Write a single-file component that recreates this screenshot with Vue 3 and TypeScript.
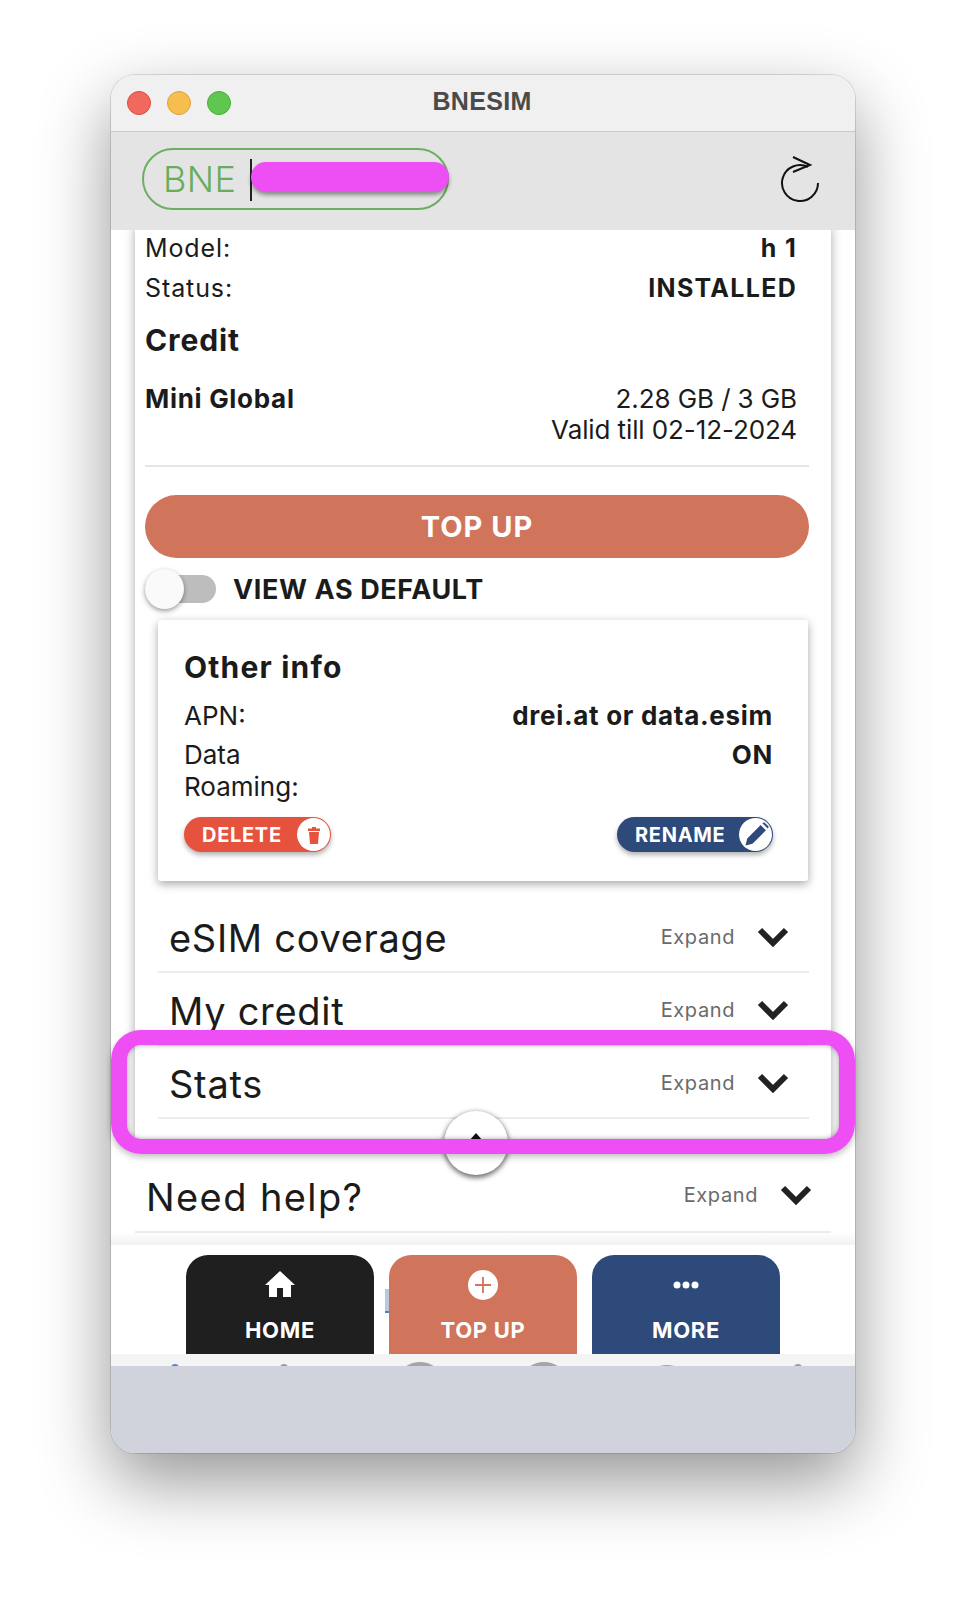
<script setup lang="ts">
const sections = ['eSIM coverage', 'My credit', 'Stats']
const navItems = [
  { label: 'HOME', cls: 'black', icon: 'home' },
  { label: 'TOP UP', cls: 'salmon', icon: 'plus' },
  { label: 'MORE', cls: 'navy', icon: 'dots' },
]
</script>

<template>
  <div class="window">
    <div class="titlebar">
      <span class="light red"></span>
      <span class="light yellow"></span>
      <span class="light green"></span>
      <span class="title">BNESIM</span>
    </div>

    <div class="header">
      <div class="search">
        <span class="search-text">BNE</span>
        <span class="caret"></span>
        <span class="redact"></span>
      </div>
      <svg class="reload" width="40" height="48" viewBox="0 0 40 48" fill="none" stroke="#111" stroke-width="2">
        <path d="M28 11.900 A18 18 0 1 0 38 28" />
        <path d="M13 2 L30 10 L13 17" />
      </svg>
    </div>

    <div class="scroll">
      <div class="card">
        <div class="row info first"><span>Model:</span><b>h 1</b></div>
        <div class="row info"><span>Status:</span><b>INSTALLED</b></div>
        <div class="credit-title">Credit</div>
        <div class="row plan">
          <b>Mini Global</b>
          <div class="plan-right">2.28 GB / 3 GB<br />Valid till 02-12-2024</div>
        </div>
        <div class="divider"></div>
        <button class="topup">TOP UP</button>
        <div class="default-row">
          <span class="toggle"><span class="knob"></span></span>
          <span class="default-label">VIEW AS DEFAULT</span>
        </div>

        <div class="other">
          <div class="other-title">Other info</div>
          <div class="row apn"><span>APN:</span><b>drei.at or data.esim</b></div>
          <div class="row roaming"><span>Data<br />Roaming:</span><b>ON</b></div>
          <div class="row actions">
            <button class="pill del">
              DELETE
              <span class="pill-icon">
                <svg width="14" height="18" viewBox="0 0 14 18" fill="#e5533f">
                  <path d="M1 2.500h4V1h4v1.500h4V5H1zM2 6h10l-1 12H3z" />
                </svg>
              </span>
            </button>
            <button class="pill ren">
              RENAME
              <span class="pill-icon">
                <svg width="28" height="28" viewBox="0 0 24 24" fill="#2d4a7a">
                  <path d="M3 21l1.500-6L16 3.500l4.500 4.500L9 19.500zM17.500 2l1.500-1 4 4-1 1.500z" />
                </svg>
              </span>
            </button>
          </div>
        </div>

        <div class="sections">
          <div v-for="s in sections" :key="s" class="section">
            <span class="section-title">{{ s }}</span>
            <span class="expand">Expand</span>
            <svg class="chev" width="32" height="20" viewBox="0 0 32 20" fill="none" stroke="#222" stroke-width="6">
              <path d="M3 3 L16 16 L29 3" />
            </svg>
          </div>
        </div>
      </div>

      <div class="section help">
        <span class="section-title">Need help?</span>
        <span class="expand">Expand</span>
        <svg class="chev" width="32" height="20" viewBox="0 0 32 20" fill="none" stroke="#222" stroke-width="6">
          <path d="M3 3 L16 16 L29 3" />
        </svg>
      </div>
      <div class="fade"></div>
    </div>

    <div class="nav">
      <span class="peek-link"></span>
      <div v-for="n in navItems" :key="n.label" class="nav-btn" :class="n.cls">
        <svg v-if="n.icon === 'home'" width="32" height="28" viewBox="0 0 32 28" fill="#fff">
          <path d="M16 1 L31 15 H27 V27 H19 V18 H13 V27 H5 V15 H1 Z" />
        </svg>
        <span v-else-if="n.icon === 'plus'" class="plus-circle">
          <svg width="16" height="16" viewBox="0 0 16 16" stroke="#d0745c" stroke-width="1.800">
            <path d="M8 0v16M0 8h16" />
          </svg>
        </span>
        <svg v-else class="dots" width="26" height="28" viewBox="0 0 26 28" fill="#fff">
          <circle cx="4" cy="14" r="3.500" />
          <circle cx="13" cy="14" r="3.500" />
          <circle cx="22" cy="14" r="3.500" />
        </svg>
        <span class="nav-label">{{ n.label }}</span>
      </div>
    </div>

    <div class="strip">
      <span class="bump small blue" style="left: 60px"></span>
      <span class="bump small" style="left: 169px"></span>
      <span class="bump" style="left: 284px"></span>
      <span class="bump" style="left: 408px"></span>
      <span class="bump mid" style="left: 531px"></span>
      <span class="bump small" style="left: 683px"></span>
    </div>
    <div class="dock"></div>

    <div class="scrolltop">
      <svg width="14" height="10" viewBox="0 0 14 10" fill="#111"><path d="M7 0 L14 8 H0 Z" /></svg>
    </div>
    <div class="highlight"></div>
  </div>
</template>

<style>
html,
body {
  margin: 0;
  background: #fff;
}
</style>

<style scoped>
.window {
  position: relative;
  box-sizing: border-box;
  width: 744px;
  height: 1378px;
  margin: 75px 0 147px 111px;
  border-radius: 24px;
  display: flex;
  flex-direction: column;
  font-family: Inter, "Open Sans", sans-serif;
  color: #1b1b1b;
  box-shadow: 0 0 0 1px rgba(0, 0, 0, 0.12), 0 28px 70px rgba(0, 0, 0, 0.42);
}

.titlebar {
  position: relative;
  height: 57px;
  flex: none;
  display: flex;
  align-items: center;
  gap: 16px;
  padding-left: 16px;
  background: #f0f0f0;
  border-bottom: 1px solid #c9c9c9;
  border-radius: 24px 24px 0 0;
  box-sizing: border-box;
}
.light {
  width: 24px;
  height: 24px;
  border-radius: 50%;
  box-sizing: border-box;
}
.red { background: #f1695c; border: 1px solid #dd4a3f; }
.yellow { background: #f6bd4f; border: 1px solid #dfa136; }
.green { background: #5fc64f; border: 1px solid #49ad39; }
.title {
  position: absolute;
  left: 311px;
  top: 12px;
  width: 120px;
  text-align: center;
  font: 700 25px "Liberation Sans", sans-serif;
  letter-spacing: 0.3px;
  color: #4a4a4a;
}

.header {
  height: 98px;
  box-sizing: border-box;
  flex: none;
  display: flex;
  align-items: center;
  justify-content: space-between;
  padding: 0 35px 4px 31px;
  background: #e4e4e4;
}
.search {
  position: relative;
  box-sizing: border-box;
  width: 307px;
  height: 62px;
  display: flex;
  align-items: center;
  border: 2px solid #6cae62;
  border-radius: 31px;
}
.search-text {
  margin-left: 19px;
  font-size: 36px;
  font-weight: 300;
  letter-spacing: 0.4px;
  color: #66ae5c;
}
.caret {
  position: absolute;
  left: 106px;
  top: 9px;
  width: 1.500px;
  height: 42px;
  background: #222;
}
.redact {
  position: absolute;
  left: 107px;
  top: 12px;
  width: 198px;
  height: 30px;
  background: #ed4ff5;
  border-radius: 15px;
  box-shadow: 0 3px 4px rgba(0, 0, 0, 0.4);
}

.scroll {
  height: 1015px;
  flex: none;
  background: #fff;
  overflow: hidden;
  position: relative;
}
.card {
  box-sizing: border-box;
  width: 696px;
  height: 916px;
  margin-left: 24px;
  padding: 0 22px 0 10px;
  background: #fff;
  box-shadow: 0 0 10px rgba(0, 0, 0, 0.35);
}
.row {
  display: flex;
  justify-content: space-between;
}
.info {
  height: 40px;
  align-items: center;
  font-size: 25px;
  padding-right: 12px;
  letter-spacing: 0.9px;
}
.info.first { margin-top: -2px; }
.info b {
  font-weight: 700;
  letter-spacing: 1.300px;
}
.credit-title {
  height: 40px;
  line-height: 40px;
  margin-top: 12px;
  font-size: 30px;
  font-weight: 700;
  letter-spacing: 0.9px;
}
.plan {
  margin-top: 23px;
  padding-right: 12px;
  font-size: 26px;
  line-height: 31px;
}
.plan b { letter-spacing: 0.7px; }
.plan-right {
  text-align: right;
  letter-spacing: -0.1px;
}
.divider {
  height: 2px;
  margin-top: 20px;
  background: #e5e5e5;
}
.topup {
  display: block;
  width: 100%;
  height: 63px;
  margin-top: 28px;
  border: none;
  border-radius: 32px;
  background: #d0745c;
  color: #fff;
  font: 700 29px Inter, sans-serif;
  letter-spacing: 1px;
}
.default-row {
  display: flex;
  align-items: center;
  height: 40px;
  margin-top: 11px;
}
.toggle {
  position: relative;
  display: block;
  width: 71px;
  height: 28px;
  border-radius: 14px;
  background: #bdbdbd;
}
.knob {
  position: absolute;
  left: 0;
  top: -6px;
  width: 39px;
  height: 40px;
  border-radius: 50%;
  background: #fafafa;
  box-shadow: 0 2px 5px rgba(0, 0, 0, 0.4);
}
.default-label {
  margin-left: 17px;
  font-size: 27px;
  font-weight: 700;
  letter-spacing: 0.6px;
}

.other {
  box-sizing: border-box;
  width: 650px;
  height: 261px;
  margin: 11px 0 0 13px;
  padding: 27px 35px 0 26px;
  border-radius: 3px;
  background: #fff;
  box-shadow: 0 3px 10px rgba(0, 0, 0, 0.35);
}
.other-title {
  height: 40px;
  line-height: 40px;
  font-size: 30px;
  font-weight: 700;
  letter-spacing: 1.200px;
}
.apn {
  height: 32px;
  line-height: 32px;
  margin-top: 13px;
  font-size: 26px;
}
.roaming {
  height: 64px;
  line-height: 32px;
  margin-top: 7px;
  font-size: 26px;
}
.apn b,
.roaming b {
  font-weight: 700;
  letter-spacing: 0.7px;
}
.actions { margin-top: 14px; }
.pill {
  display: flex;
  align-items: center;
  justify-content: space-between;
  height: 35px;
  padding: 0 0 0 18px;
  border: none;
  border-radius: 18px;
  color: #fff;
  font: 700 20px Inter, sans-serif;
  letter-spacing: 0.7px;
  box-shadow: 0 3px 5px rgba(0, 0, 0, 0.3);
}
.pill.del { width: 147px; background: #e5533f; }
.pill.ren { width: 156px; background: #2d4a7a; }
.pill-icon {
  display: flex;
  align-items: center;
  justify-content: center;
  box-sizing: border-box;
  width: 33px;
  height: 33px;
  margin-right: 1px;
  border-radius: 50%;
  background: #fff;
}

.sections {
  margin: 19px 0 0 13px;
}
.section {
  box-sizing: border-box;
  height: 73px;
  display: flex;
  align-items: center;
  padding: 2px 20px 0 11px;
  border-bottom: 2px solid #ececec;
}
.section-title {
  flex: 1;
  margin-top: 2px;
  font-size: 38px;
  font-weight: 400;
  letter-spacing: 0.7px;
}
.expand {
  font-size: 20px;
  color: #6a6a6a;
  letter-spacing: 0.6px;
  margin-right: 22px;
}
.help {
  width: 696px;
  margin: 16px 0 0 24px;
  padding-right: 19px;
}
.help .section-title {
  margin-top: 0;
  letter-spacing: 1.400px;
}
.help .expand,
.help .chev { margin-bottom: 4px; }
.fade {
  position: absolute;
  left: 0;
  right: 0;
  bottom: 0;
  height: 13px;
  background: linear-gradient(rgba(255, 255, 255, 0), rgba(235, 235, 235, 0.7));
}

.nav {
  position: relative;
  height: 109px;
  flex: none;
  display: flex;
  gap: 15px;
  padding: 10px 0 0 75px;
  box-sizing: border-box;
  background: #fff;
}
.peek-link {
  position: absolute;
  left: 274px;
  top: 44px;
  width: 6px;
  height: 22px;
  background: #b9c8de;
  border-bottom: 2px solid #5a7fb5;
}
.nav-btn {
  position: relative;
  width: 188px;
  height: 99px;
  border-radius: 22px 22px 0 0;
  display: flex;
  flex-direction: column;
  align-items: center;
  color: #fff;
}
.nav-btn svg { margin-top: 15px; }
.nav-btn svg.dots { margin-top: 16px; }
.black { background: #1f1f1f; }
.salmon { background: #d0745c; }
.navy { background: #2d4a7a; }
.plus-circle {
  display: flex;
  align-items: center;
  justify-content: center;
  width: 30px;
  height: 30px;
  margin-top: 15px;
  border-radius: 50%;
  background: #fff;
}
.plus-circle svg { margin: 0; }
.nav-label {
  position: absolute;
  top: 62px;
  font-size: 22px;
  font-weight: 700;
  letter-spacing: 0.7px;
}

.strip {
  position: relative;
  height: 12px;
  flex: none;
  overflow: hidden;
  background: #f4f4f4;
}
.bump {
  position: absolute;
  top: 8px;
  width: 50px;
  height: 50px;
  box-sizing: border-box;
  border: 5px solid #a5a5a5;
  border-radius: 50%;
}
.bump.mid { top: 11px; }
.bump.small {
  top: 10px;
  width: 8px;
  height: 8px;
  border: none;
  background: #9a9a9a;
}
.bump.blue { background: #4a86e8; }

.dock {
  flex: 1;
  background: #d0d3db;
  border-radius: 0 0 24px 24px;
}

.scrolltop {
  position: absolute;
  left: 333px;
  top: 1036px;
  width: 64px;
  height: 64px;
  padding-top: 22px;
  box-sizing: border-box;
  display: flex;
  justify-content: center;
  align-items: flex-start;
  border-radius: 50%;
  background: #fff;
  box-shadow: 0 2px 5px 1px rgba(0, 0, 0, 0.55);
}
.highlight {
  position: absolute;
  left: 0;
  top: 955px;
  width: 744px;
  height: 124px;
  box-sizing: border-box;
  border: solid #ed4ff5;
  border-width: 15px 16px;
  border-radius: 30px;
  box-shadow: 0 3px 6px rgba(0, 0, 0, 0.25), inset 0 0 5px rgba(0, 0, 0, 0.35);
}
</style>
